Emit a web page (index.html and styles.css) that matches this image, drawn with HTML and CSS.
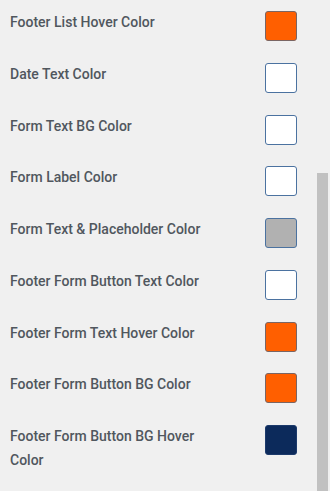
FILE: index.html
```html
<!DOCTYPE html>
<html>
<head>
<meta charset="utf-8">
<link rel="stylesheet" href="styles.css">
</head>
<body>
<div class="panel">
  <div class="row"><div class="label">Footer List Hover Color</div><div class="swatch orange"></div></div>
  <div class="row"><div class="label">Date Text Color</div><div class="swatch white"></div></div>
  <div class="row"><div class="label">Form Text BG Color</div><div class="swatch white"></div></div>
  <div class="row"><div class="label">Form Label Color</div><div class="swatch white"></div></div>
  <div class="row"><div class="label">Form Text &amp; Placeholder Color</div><div class="swatch gray"></div></div>
  <div class="row"><div class="label">Footer Form Button Text Color</div><div class="swatch white"></div></div>
  <div class="row"><div class="label">Footer Form Text Hover Color</div><div class="swatch orange"></div></div>
  <div class="row"><div class="label">Footer Form Button BG Color</div><div class="swatch orange"></div></div>
  <div class="row"><div class="label">Footer Form Button BG Hover Color</div><div class="swatch navy"></div></div>
</div>
<div class="scrollbar"></div>
</body>
</html>
```

FILE: styles.css
```css
html, body {
  margin: 0;
  padding: 0;
  background: #f0f0f0;
  width: 330px;
  height: 491px;
  overflow: hidden;
}
body {
  position: relative;
  font-family: Roboto, "Liberation Sans", sans-serif;
}
.panel {
  display: flex;
  flex-direction: column;
  gap: 20.75px;
  padding: 10px 0 0 10px;
}
.row {
  display: flex;
  align-items: flex-start;
  width: 287px;
  justify-content: space-between;
}
.label {
  width: 215px;
  font-size: 14px;
  font-weight: 500;
  line-height: 24px;
  color: #50575e;
}
.swatch {
  width: 30px;
  height: 28px;
  margin-top: 1px;
  border: 1px solid #4f6f96;
  border-radius: 3px;
}
.orange { background: #ff5f00; border-color: #7a6563; }
.white { background: #ffffff; border-color: #4b72a0; }
.gray { background: #b1b1b1; border-color: #4b72a0; }
.navy { background: #0c2a5b; border-color: #1c3a6b; }
.scrollbar {
  position: absolute;
  left: 317px;
  top: 173px;
  width: 11px;
  bottom: 0;
  background: #c1c1c1;
}
```
